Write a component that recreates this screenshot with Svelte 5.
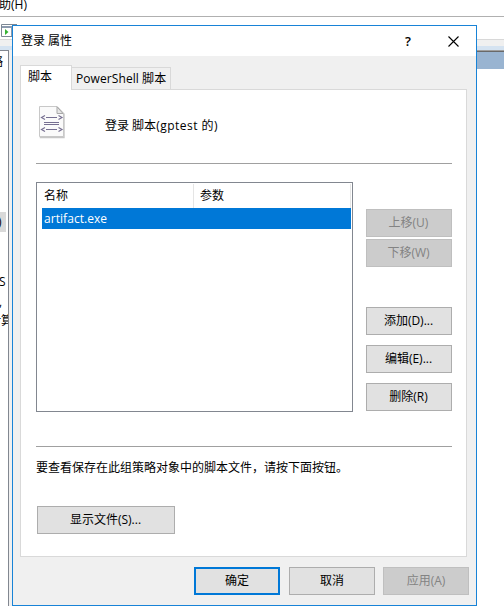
<script>
  const columns = ['名称', '参数'];
  const rows = [{ name: 'artifact.exe', args: '' }];
  const moves = ['上移(U)', '下移(W)'];
  const edits = ['添加(D)...', '编辑(E)...', '删除(R)'];
</script>

<div class="desktop">
  <div class="menubar">助(H)</div>
  <div class="toolbar">
    <svg width="17" height="13" viewBox="0 0 17 13">
      <path d="M1.5 12.5V.5H17M1.5 12.5H17" fill="none" stroke="#7d8894" />
      <path d="M2 2h15v2H2z" fill="#8b9aae" />
      <path d="M2 4h10v8H2z" fill="#fff" />
      <path d="M11.5 4v8" stroke="#8b9aae" />
      <path d="M5 5 8.500 8 5 11z" fill="#35b232" />
    </svg>
  </div>
  <div class="strip"></div>
  <div class="band"></div>
  <div class="content">
    <div class="tree">
      <span class="frag a">略</span>
      <span class="frag sel">)</span>
      <span class="frag s">S</span>
      <span class="frag c">,</span>
      <span class="frag d">计算</span>
    </div>
    <div class="gutter"></div>
    <div class="pane"><div class="bluebar"></div></div>
  </div>
</div>

<div class="dialog">
  <header>
    <span class="title">登录 属性</span>
    <span class="help">?</span>
    <svg width="11" height="11" viewBox="0 0 11 11"><path d="M.5.5l10 10M10.5.5l-10 10" stroke="#000" stroke-width="1.1" fill="none" /></svg>
  </header>
  <nav>
    <div class="tab active">脚本</div>
    <div class="tab">PowerShell 脚本</div>
  </nav>
  <main>
    <div class="intro">
      <svg width="27" height="33" viewBox="0 0 27 33">
        <path d="M1.5 1.5h17l6.5 6.5v23.5H1.5z" fill="#c9c9c9" stroke="#c6c6c6" stroke-width="1.4" />
        <path d="M.5.5h17.500l6.500 7v23H.5z" fill="#fafafa" stroke="#c8c8c8" />
        <path d="M18 .8v6.700h6z" fill="#e6e6e6" stroke="#a8a8a8" />
        <path d="M6 9.500 2.500 11.500l3.500 2M19.500 9.500l3.500 2-3.500 2M7 11.500h11M5 16.500h15M5 18.500h15M6 21.500l-3.500 2 3.500 2M19.500 21.500l3.500 2-3.500 2M7 23.500h11" fill="none" stroke="#766f91" stroke-width="1.15" />
      </svg>
      <span>登录 脚本<span class="wide">(gptest 的)</span></span>
    </div>
    <hr />
    <div class="middle">
      <div class="list">
        <div class="head">
          {#each columns as column}<span>{column}</span>{/each}
        </div>
        {#each rows as row}
          <div class="row"><span>{row.name}</span><span>{row.args}</span></div>
        {/each}
      </div>
      <div class="actions">
        <div class="group moves">
          {#each moves as label}<button disabled>{label}</button>{/each}
        </div>
        <div class="group">
          {#each edits as label}<button>{label}</button>{/each}
        </div>
      </div>
    </div>
    <hr class="second" />
    <p>要查看保存在此组策略对象中的脚本文件，请按下面按钮。</p>
    <button class="show">显示文件(S)...</button>
  </main>
  <footer>
    <button class="default">确定</button>
    <button>取消</button>
    <button class="apply" disabled>应用(A)</button>
  </footer>
</div>

<style>
  :global(body) { background: #fff; overflow: hidden; }
  :global(#app) { position: relative; width: 504px; height: 606px; overflow: hidden; }
  .desktop, .dialog, button {
    font: 12px/16px "Open Sans", "Noto Sans CJK SC", sans-serif;
    color: #000;
    white-space: nowrap;
  }
  .desktop, .dialog, .desktop *, .dialog * { box-sizing: border-box; }
  svg { display: block; flex: none; }
  .desktop { display: flex; flex-direction: column; height: 606px; }
  .menubar { height: 17px; line-height: 10px; border-bottom: 1px solid #b0b0b0; flex: none; text-indent: -1px; }
  .toolbar { height: 23px; padding: 7px 0 0; border-bottom: 1px solid #d8d8d8; flex: none; }
  .strip { height: 6px; background: #f0f0f0; flex: none; }
  .band { height: 4px; background: #d5e3f1; flex: none; }
  .content { flex: 1; display: flex; }
  .tree { position: relative; width: 9px; overflow: hidden; border-top: 1px solid #828790; border-right: 1px solid #828790; }
  .frag { position: absolute; line-height: 20px; }
  .a { top: 1px; right: 5px; }
  .sel { top: 161px; left: 0; width: 6px; height: 20px; background: #d9d9d9; text-indent: -2px; overflow: hidden; }
  .s { top: 221px; left: -1px; }
  .c { top: 241px; left: -1px; }
  .d { top: 260px; right: -5px; }
  .gutter { width: 3px; background: #f0f0f0; }
  .pane { flex: 1; border-top: 1px solid #a0a0a0; }
  .bluebar { height: 18px; background: #99b4d1; border-top: 1px solid #696969; }

  .dialog {
    position: absolute;
    left: 12px;
    top: 25px;
    width: 465px;
    height: 581px;
    border: 1px solid #1883d7;
    background: #f0f0f0;
    display: flex;
    flex-direction: column;
  }
  header { height: 30px; background: #fff; display: flex; align-items: center; padding: 0 17px 0 8px; flex: none; }
  .title { flex: 1; }
  .help { font-size: 13px; font-weight: 600; width: 8px; margin-right: 35px; }
  nav { display: flex; align-items: flex-end; padding-left: 7px; height: 33px; flex: none; }
  .tab { height: 22px; width: 99px; border: 1px solid #d9d9d9; border-bottom: 0; border-left: 0; padding: 3px 0 0 4px; letter-spacing: .08px; }
  .tab.active { position: relative; z-index: 1; height: 25px; width: 52px; margin-bottom: -1px; background: #fff; border-left: 1px solid #d9d9d9; padding: 3px 0 0 7px; }
  main { margin: 0 9px 0 7px; height: 468px; border: 1px solid #d9d9d9; background: #fff; padding: 16px 14px 0 15px; flex: none; }
  .intro { height: 57px; display: flex; align-items: flex-start; padding-left: 3px; gap: 39px; }
  .intro > span { padding-top: 12px; }
  .wide { letter-spacing: .48px; }
  hr { margin: 0; border: 0; height: 1px; background: #a0a0a0; }
  .middle { display: flex; justify-content: space-between; margin-top: 18px; }
  .list { width: 317px; height: 230px; border: 1px solid #828790; padding: 1px 1px 0; }
  .head { display: flex; height: 24px; }
  .head span { width: 156px; border-right: 1px solid #e5e5e5; padding: 4px 0 0 6px; }
  .head span:last-child { width: 157px; }
  .row { display: flex; height: 21px; margin-left: 4px; background: #0078d7; color: #fff; padding: 3px 2px 2px; letter-spacing: .05px; }
  .row span { width: 152px; }
  .actions { padding-top: 27px; display: flex; flex-direction: column; gap: 40px; }
  .group { display: flex; flex-direction: column; gap: 10px; }
  .moves { gap: 2px; }
  button { display: block; width: 86px; height: 28px; margin: 0; padding: 0 1px 1px 0; border: 1px solid #adadad; border-radius: 0; background: #e1e1e1; }
  button:disabled { background: #ccc; border-color: #bfbfbf; color: #838383; }
  .second { margin-top: 34px; }
  p { margin: 13px 0 0; }
  .show { width: 138px; margin: 30px 0 0 1px; }
  footer { display: flex; justify-content: flex-end; gap: 9px; padding: 10px 7px 0 0; }
  footer button { padding-right: 0; }
  .apply { margin-left: -1px; }
  .default { border: 2px solid #0078d7; }
</style>
